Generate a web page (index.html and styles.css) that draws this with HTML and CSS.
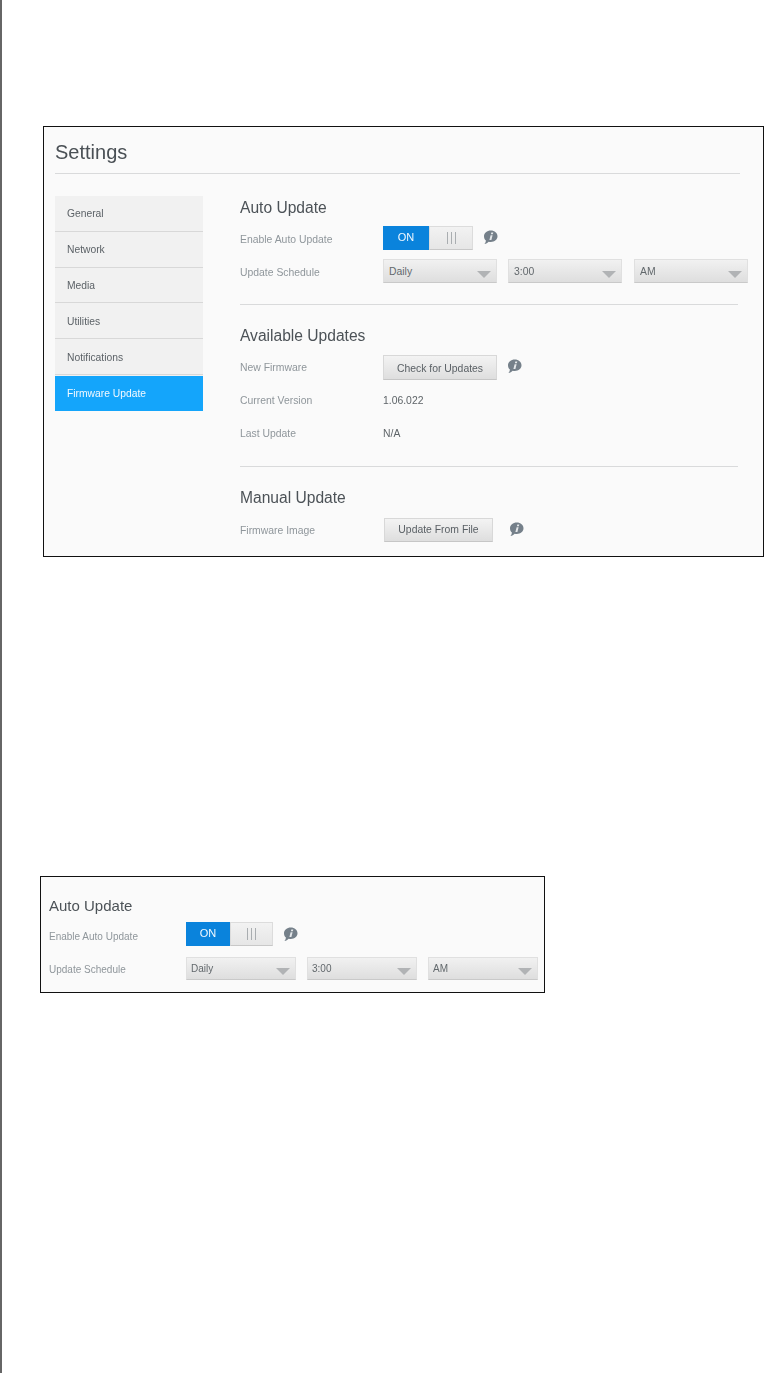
FILE: index.html
```html
<!DOCTYPE html>
<html lang="en">
<head>
<meta charset="utf-8">
<title>Settings - Firmware Update</title>
<link rel="stylesheet" href="styles.css">
</head>
<body>
<svg class="defs" width="0" height="0" aria-hidden="true">
  <symbol id="info" viewBox="0 0 15 15">
    <path d="M7.8 0.5C11.6 0.5 14.5 3 14.5 6.3C14.5 9.6 11.6 12 7.8 12C7 12 6.4 11.9 5.7 11.7C4.6 12.9 3.2 13.8 1.4 14C2.3 13.1 2.8 12 2.9 10.6C1.6 9.5 1 8 1 6.3C1 3 4 0.5 7.8 0.5Z" fill="#75808a"/>
    <path d="M8.3 2.4h2l-0.4 1.8h-2zM7.6 5.2h2L8.4 10H6.4z" fill="#e4e7ea"/>
  </symbol>
</svg>
<main class="page">
  <section class="figure figure-full">
    <header class="page-head"><h1>Settings</h1></header>
    <div class="layout">
      <nav class="sidebar">
        <a class="nav-item">General</a>
        <a class="nav-item">Network</a>
        <a class="nav-item">Media</a>
        <a class="nav-item">Utilities</a>
        <a class="nav-item">Notifications</a>
        <a class="nav-item active">Firmware Update</a>
      </nav>
      <div class="panel">
        <h2>Auto Update</h2>
        <div class="row row-enable">
          <span class="label">Enable Auto Update</span>
          <div class="toggle"><span class="toggle-on">ON</span><span class="toggle-off"><i></i><i></i><i></i></span></div>
          <svg class="info info-toggle"><use href="#info"/></svg>
        </div>
        <div class="row row-schedule">
          <span class="label">Update Schedule</span>
          <div class="selects">
            <div class="select">Daily</div>
            <div class="select">3:00</div>
            <div class="select">AM</div>
          </div>
        </div>
        <hr class="rule">
        <h2>Available Updates</h2>
        <div class="row row-new">
          <span class="label">New Firmware</span>
          <button class="btn btn-check">Check for Updates</button>
          <svg class="info info-check"><use href="#info"/></svg>
        </div>
        <div class="row row-version">
          <span class="label">Current Version</span>
          <span class="value">1.06.022</span>
        </div>
        <div class="row row-last">
          <span class="label">Last Update</span>
          <span class="value">N/A</span>
        </div>
        <hr class="rule rule-two">
        <h2>Manual Update</h2>
        <div class="row row-manual">
          <span class="label">Firmware Image</span>
          <button class="btn btn-file">Update From File</button>
          <svg class="info info-file"><use href="#info"/></svg>
        </div>
      </div>
    </div>
  </section>

  <section class="figure figure-crop">
    <div class="crop-body">
      <h2>Auto Update</h2>
      <div class="row row-enable">
        <span class="label">Enable Auto Update</span>
        <div class="toggle"><span class="toggle-on">ON</span><span class="toggle-off"><i></i><i></i><i></i></span></div>
        <svg class="info info-toggle"><use href="#info"/></svg>
      </div>
      <div class="row row-schedule">
        <span class="label">Update Schedule</span>
        <div class="selects">
          <div class="select">Daily</div>
          <div class="select">3:00</div>
          <div class="select">AM</div>
        </div>
      </div>
    </div>
  </section>
</main>
</body>
</html>
```

FILE: styles.css
```css
* { box-sizing: border-box; }

html, body {
  margin: 0;
  padding: 0;
  background: #fff;
}

.defs { position: absolute; }

.page {
  height: 1373px;
  overflow: hidden;
  border-left: 2px solid #666;
  padding: 126px 0 0 38px;
  font-family: "Liberation Sans", Arial, sans-serif;
  color: #555b60;
}

.figure {
  border: 1px solid #111;
  background: #fafafa;
}

/* The reference is a soft, scanned-looking capture */
.page-head,
.layout,
.crop-body {
  filter: blur(0.35px);
}

/* Full settings figure */
.figure-full {
  width: 721px;
  height: 431px;
  margin-left: 3px;
  padding-left: 11px;
}

.page-head {
  height: 47px;
  margin-right: 23px;
  border-bottom: 1px solid #d9dadb;
}

h1 {
  margin: 0;
  padding-top: 13px;
  font-size: 20px;
  line-height: 24px;
  font-weight: 400;
  color: #4a5055;
}

.layout {
  display: flex;
  margin-top: 22px;
}

.sidebar {
  display: flex;
  flex-direction: column;
  flex: none;
  width: 148px;
  height: 215px;
  margin-right: 37px;
  background: #f1f1f1;
}

.nav-item {
  display: flex;
  align-items: center;
  height: 36px;
  padding: 1px 0 0 12px;
  background: #f1f1f1;
  border-bottom: 1px solid #d8d8d8;
  font-size: 10.3px;
  color: #5c6267;
}

.nav-item.active {
  height: 35px;
  margin-top: 1px;
  padding-top: 0;
  background: #14a5fb;
  border-bottom: 0;
  color: #f2f9ff;
}

.panel {
  flex: 1;
  min-width: 0;
}

h2 {
  margin: 0;
  height: 24px;
  font-size: 15.6px;
  line-height: 24px;
  font-weight: 400;
  color: #4c5257;
}

.row {
  display: flex;
  align-items: center;
  height: 24px;
}

.label {
  flex: none;
  width: 143px;
  font-size: 10.4px;
  color: #8f969b;
}

.row-enable .label,
.row-schedule .label {
  padding-top: 2px;
}

.value {
  font-size: 10.4px;
  color: #5e6468;
}

.figure-full .row-enable { margin-top: 6px; }
.figure-full .row-schedule { margin-top: 9px; }
.row-new { height: 25px; margin-top: 7px; }
.row-version { margin-top: 8px; }
.row-last { margin-top: 9px; }
.row-manual { margin-top: 8px; }

.rule {
  width: 498px;
  height: 1px;
  margin: 21px 0 19px;
  border: 0;
  background: #d9dadb;
}

.rule-two { margin-top: 21px; }

.toggle {
  display: flex;
  flex: none;
  width: 90px;
  height: 24px;
}

.toggle-on {
  width: 46px;
  background: #0a83dc;
  color: #f2f9ff;
  font-size: 11px;
  line-height: 22px;
  text-align: center;
}

.toggle-off {
  display: flex;
  flex: 1;
  justify-content: center;
  align-items: center;
  gap: 3px;
  background: linear-gradient(#f2f2f2, #e6e6e6);
  border: 1px solid #dcdcdc;
  border-bottom-color: #c8c8c8;
}

.toggle-off i {
  width: 1px;
  height: 12px;
  background: #a9adb0;
}

.info {
  flex: none;
  width: 15px;
  height: 15px;
}

.info-toggle { margin-left: 10px; margin-top: -1px; }
.info-check { margin-left: 10px; margin-top: -2px; }
.info-file { margin-left: 16px; margin-top: -2px; }

.selects {
  display: flex;
  gap: 11px;
}

.select {
  position: relative;
  width: 114px;
  height: 24px;
  padding-left: 5px;
  display: flex;
  align-items: center;
  background: linear-gradient(#f1f1f1, #dedede);
  border: 1px solid #e0e0e0;
  border-bottom-color: #c9c9c9;
  font-size: 10.4px;
  color: #62686c;
}

.select:last-child {
  margin-left: 1px;
}

.select::after {
  content: "";
  position: absolute;
  right: 5px;
  bottom: 4px;
  border-style: solid;
  border-width: 7px 7px 0;
  border-color: #b1b3b5 transparent transparent;
}

.btn {
  flex: none;
  height: 100%;
  padding: 0;
  font-family: inherit;
  font-size: 10.4px;
  color: #5a6065;
  background: linear-gradient(#f3f3f3, #dedede);
  border: 1px solid #d8d8d8;
  border-bottom-color: #c6c6c6;
}

.btn-check { width: 114px; padding-top: 1px; }
.btn-file { width: 109px; margin-left: 1px; padding-bottom: 2px; }

/* Cropped detail figure */
.figure-crop {
  width: 505px;
  height: 117px;
  margin-top: 319px;
  padding: 17px 0 0 8px;
}

.figure-crop h2 {
  font-size: 15px;
}

.figure-crop .label {
  width: 137px;
  font-size: 10px;
}

.figure-crop .row-enable { margin-top: 4px; }
.figure-crop .row-enable .label { padding-top: 4px; }
.figure-crop .row-schedule { margin-top: 11px; height: 23px; }

.figure-crop .toggle { width: 87px; }
.figure-crop .toggle-on { width: 44px; }
.figure-crop .info-toggle { margin-top: 1px; }

.figure-crop .selects { gap: 11px; }

.figure-crop .select {
  width: 110px;
  height: 23px;
  padding-left: 4px;
  font-size: 10px;
}

.figure-crop .select:last-child {
  margin-left: 0;
}
```
